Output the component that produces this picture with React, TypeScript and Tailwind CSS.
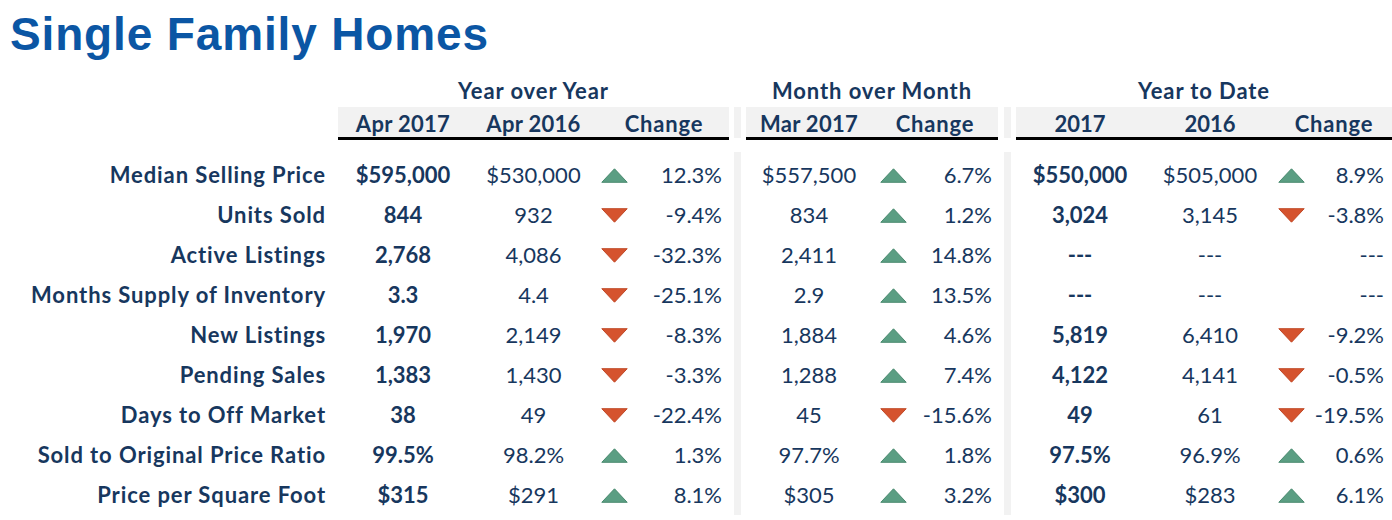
type Dir = "up" | "down" | null;

type Row = {
  label: string;
  a: string;
  b: string;
  d1: Dir;
  c1: string;
  m: string;
  d2: Dir;
  c2: string;
  y1: string;
  y2: string;
  d3: Dir;
  c3: string;
};

const rows: Row[] = [
  { label: "Median Selling Price", a: "$595,000", b: "$530,000", d1: "up", c1: "12.3%", m: "$557,500", d2: "up", c2: "6.7%", y1: "$550,000", y2: "$505,000", d3: "up", c3: "8.9%" },
  { label: "Units Sold", a: "844", b: "932", d1: "down", c1: "-9.4%", m: "834", d2: "up", c2: "1.2%", y1: "3,024", y2: "3,145", d3: "down", c3: "-3.8%" },
  { label: "Active Listings", a: "2,768", b: "4,086", d1: "down", c1: "-32.3%", m: "2,411", d2: "up", c2: "14.8%", y1: "---", y2: "---", d3: null, c3: "---" },
  { label: "Months Supply of Inventory", a: "3.3", b: "4.4", d1: "down", c1: "-25.1%", m: "2.9", d2: "up", c2: "13.5%", y1: "---", y2: "---", d3: null, c3: "---" },
  { label: "New Listings", a: "1,970", b: "2,149", d1: "down", c1: "-8.3%", m: "1,884", d2: "up", c2: "4.6%", y1: "5,819", y2: "6,410", d3: "down", c3: "-9.2%" },
  { label: "Pending Sales", a: "1,383", b: "1,430", d1: "down", c1: "-3.3%", m: "1,288", d2: "up", c2: "7.4%", y1: "4,122", y2: "4,141", d3: "down", c3: "-0.5%" },
  { label: "Days to Off Market", a: "38", b: "49", d1: "down", c1: "-22.4%", m: "45", d2: "down", c2: "-15.6%", y1: "49", y2: "61", d3: "down", c3: "-19.5%" },
  { label: "Sold to Original Price Ratio", a: "99.5%", b: "98.2%", d1: "up", c1: "1.3%", m: "97.7%", d2: "up", c2: "1.8%", y1: "97.5%", y2: "96.9%", d3: "up", c3: "0.6%" },
  { label: "Price per Square Foot", a: "$315", b: "$291", d1: "up", c1: "8.1%", m: "$305", d2: "up", c2: "3.2%", y1: "$300", y2: "$283", d3: "up", c3: "6.1%" },
];

const Arrow = ({ dir }: { dir: Dir }) => {
  if (!dir) return <span className="w-[27px]" />;
  if (dir === "up")
    return (
      <svg width="27" height="15" viewBox="0 0 27 15" className="shrink-0">
        <polygon points="13.5,0.8 26.2,14.3 0.8,14.3" fill="#5b9e83" stroke="#4b8b70" strokeWidth="1" />
      </svg>
    );
  return (
    <svg width="27" height="15" viewBox="0 0 27 15" className="shrink-0">
      <polygon points="0.8,0.7 26.2,0.7 13.5,14.2" fill="#d5532e" stroke="#c14a28" strokeWidth="1" />
    </svg>
  );
};

const Change = ({ dir, value, w, pl, pr }: { dir: Dir; value: string; w: string; pl: string; pr: string }) => (
  <div className={`flex items-center justify-between ${w} ${pl} ${pr}`}>
    <Arrow dir={dir} />
    <span>{value}</span>
  </div>
);

const Bar = () => <div className="w-[7px] self-stretch bg-[#f2f2f2]" />;

// one row of the body: label column, then the three groups split by grey bars
const Spacer = () => (
  <div className="flex h-[3px]">
    <div className="w-[734px]" />
    <Bar />
    <div className="w-[263px]" />
    <Bar />
  </div>
);

export default function App() {
  return (
    <div className="w-[1392px] h-[520px] overflow-hidden bg-white text-[#17375e]">
      <div className="h-[75px] pt-[11px] pl-[10px]">
        <h1 className="text-[46px] leading-none font-bold tracking-[0.85px] text-[#0b56a4] font-['Liberation_Sans',Arial,sans-serif]">
          Single Family Homes
        </h1>
      </div>

      <div className="font-['Lato',sans-serif] text-[22px]">
        <div className="flex h-[32px] leading-[32px] font-bold tracking-[0.9px]">
          <div className="w-[338px]" />
          <div className="w-[391px] text-center">Year over Year</div>
          <div className="w-[17px]" />
          <div className="w-[252px] text-center">Month over Month</div>
          <div className="w-[18px]" />
          <div className="w-[376px] text-center">Year to Date</div>
        </div>

        <div className="flex items-start font-bold leading-[26px]">
          <div className="w-[338px]" />
          <div className="flex w-[391px] h-[33px] pt-[4px] bg-[#f2f2f2] border-b-[3px] border-black">
            <div className="w-[130px] text-center tracking-[0.3px]">Apr 2017</div>
            <div className="w-[131px] text-center tracking-[0.3px]">Apr 2016</div>
            <div className="w-[130px] text-center tracking-[0.8px]">Change</div>
          </div>
          <div className="w-[5px]" />
          <div className="w-[7px] h-[31px] bg-[#f2f2f2]" />
          <div className="w-[5px]" />
          <div className="flex w-[252px] h-[33px] pt-[4px] bg-[#f2f2f2] border-b-[3px] border-black">
            <div className="w-[126px] text-center tracking-[0.3px]">Mar 2017</div>
            <div className="w-[126px] text-center tracking-[0.8px]">Change</div>
          </div>
          <div className="w-[6px]" />
          <div className="w-[7px] h-[31px] bg-[#f2f2f2]" />
          <div className="w-[5px]" />
          <div className="flex w-[376px] h-[33px] pt-[4px] bg-[#f2f2f2] border-b-[3px] border-black">
            <div className="w-[128px] text-center">2017</div>
            <div className="w-[132px] text-center">2016</div>
            <div className="w-[116px] text-center tracking-[0.8px]">Change</div>
          </div>
        </div>

        <div className="mt-[12px]">
          <Spacer />
          {rows.map((r) => (
            <div key={r.label} className="flex h-[40px] leading-[40px]">
              <div className="w-[338px] pr-[12px] text-right font-bold whitespace-nowrap tracking-[0.9px]">{r.label}</div>
              <div className="w-[130px] text-center font-bold">{r.a}</div>
              <div className="w-[131px] text-center">{r.b}</div>
              <Change dir={r.d1} value={r.c1} w="w-[130px]" pl="pl-[2px]" pr="pr-[7px]" />
              <div className="w-[5px]" />
              <Bar />
              <div className="w-[5px]" />
              <div className="w-[126px] text-center">{r.m}</div>
              <Change dir={r.d2} value={r.c2} w="w-[126px]" pl="pl-[8px]" pr="pr-[6px]" />
              <div className="w-[6px]" />
              <Bar />
              <div className="w-[5px]" />
              <div className="w-[128px] text-center font-bold">{r.y1}</div>
              <div className="w-[132px] text-center">{r.y2}</div>
              <Change dir={r.d3} value={r.c3} w="w-[116px]" pl="pl-[2px]" pr="pr-[8px]" />
            </div>
          ))}
        </div>
      </div>
    </div>
  );
}
